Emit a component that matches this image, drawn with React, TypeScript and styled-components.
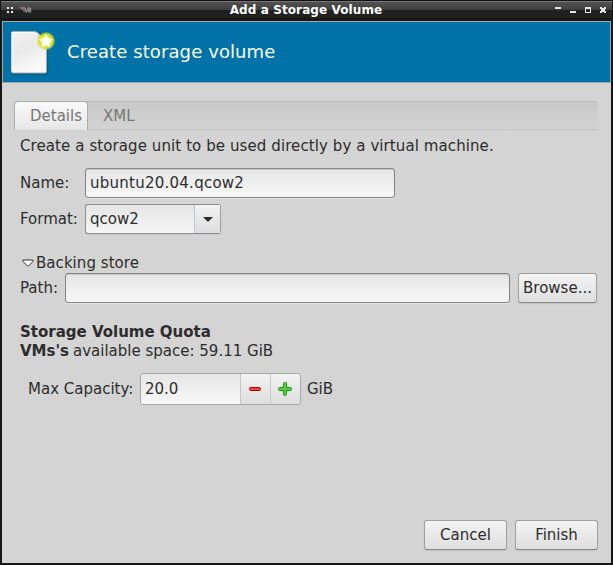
import React from "react";
import styled, { createGlobalStyle } from "styled-components";

const GlobalStyle = createGlobalStyle`
  * { box-sizing: border-box; }
  body { margin: 0; background: #191919; font-family: "DejaVu Sans", sans-serif; font-size: 15px; color: #2d2d2d; }
`;

const Window = styled.div`
  width: 613px;
  height: 565px;
  display: flex;
  flex-direction: column;
  padding: 0 2px 2px;
  background: #171717;
`;

const TitleBar = styled.header`
  height: 21px;
  flex: none;
  display: flex;
  align-items: flex-start;
  margin: 0 -1px;
  padding: 0 5px 0 6px;
  border-top: 1px solid #111;
  background: linear-gradient(#777 0 1px, #525252 1px, #3e3e3e 9px, #202020 9px, #202020 17px, #171717 17px);
`;

const TitleText = styled.h1`
  flex: 1;
  margin: 0;
  font-size: 12px;
  line-height: 18px;
  font-weight: bold;
  color: #fff;
  text-align: center;
  letter-spacing: 0.1px;
  padding-left: 20px;
`;

const Body = styled.main`
  flex: 1;
  display: flex;
  flex-direction: column;
  background: #d4d4d4;
`;

const Banner = styled.div`
  height: 62px;
  flex: none;
  display: flex;
  align-items: center;
  border: 1px solid #a8a8a8;
  background: #0072a8;
  padding-left: 6px;
`;

const BannerText = styled.h2`
  margin: 0 0 0 10px;
  font-size: 18px;
  line-height: 24px;
  font-weight: normal;
  letter-spacing: 0.1px;
  color: #fff;
  white-space: nowrap;
`;

const Tabs = styled.nav`
  display: flex;
  height: 29px;
  flex: none;
  margin: 18px 13px 0 12px;
  border-top: 1px solid #bdbdbd;
  border-bottom: 1px solid #c0c0c0;
  border-radius: 4px 4px 0 0;
  background: linear-gradient(#c9c9c9, #d3d3d3);
`;

const Tab = styled.div<{ $active?: boolean }>`
  width: ${(p) => (p.$active ? 74 : 60)}px;
  margin: -1px 0;
  padding-left: ${(p) => (p.$active ? 15 : 14)}px;
  line-height: 28px;
  color: #777;
  white-space: nowrap;
  border: ${(p) => (p.$active ? "1px solid #aeaeae" : "1px solid transparent")};
  border-bottom: 0;
  border-radius: 4px 4px 0 0;
  background: ${(p) => (p.$active ? "linear-gradient(#fafafa, #e6e6e6)" : "none")};
`;

const Line = styled.div<{ $top?: number; $height?: number; $indent?: number }>`
  display: flex;
  align-items: center;
  flex: none;
  white-space: nowrap;
  height: ${(p) => p.$height ?? 30}px;
  margin-top: ${(p) => p.$top ?? 0}px;
  padding-left: ${(p) => p.$indent ?? 18}px;
`;

const Label = styled.span<{ $width?: number; $bold?: boolean; $spacing?: number }>`
  flex: none;
  line-height: 18px;
  width: ${(p) => (p.$width ? `${p.$width}px` : "auto")};
  font-weight: ${(p) => (p.$bold ? "bold" : "normal")};
  letter-spacing: ${(p) => p.$spacing ?? 0}px;
`;

const Unit = styled(Label)`
  margin-left: 6px;
`;

const Entry = styled.div<{ $width: number }>`
  width: ${(p) => p.$width}px;
  height: 30px;
  padding-left: 4px;
  line-height: 28px;
  letter-spacing: 0.25px;
  border: 1px solid #858585;
  border-radius: 3px;
  background: linear-gradient(#e6e6e6, #f7f7f7);
  box-shadow: inset 0 1px 1px #c6c6c6, 0 1px 0 #e4e4e4;
`;

const Combo = styled.div`
  display: flex;
  width: 136px;
  height: 30px;
  border: 1px solid #8b8f94;
  border-right-color: #a0a0a0;
  border-radius: 3px;
  background: linear-gradient(#e5e5e5, #f6f6f6);
  box-shadow: 0 1px 0 #c8c8c8;
`;

const ComboText = styled.div`
  width: 109px;
  padding-left: 4px;
  line-height: 28px;
  border-right: 1px solid #bac6d0;
`;

const ComboArrow = styled.div`
  flex: 1;
  display: grid;
  place-items: center;
  padding-left: 1px;
  background: linear-gradient(#f2f2f2, #dedede);
`;

const Button = styled.button<{ $width: number }>`
  width: ${(p) => p.$width}px;
  height: 30px;
  flex: none;
  margin: 0 0 0 8px;
  padding: 0 0 1px;
  font: inherit;
  color: inherit;
  white-space: nowrap;
  border: 1px solid #a0a0a0;
  border-bottom-color: #888;
  border-radius: 3px;
  background: linear-gradient(#f4f4f4, #dedede);
  box-shadow: 0 1px 1px #c2c2c2;
`;

const Spin = styled.div`
  display: flex;
  width: 161px;
  height: 32px;
  border: 1px solid #a8a8a8;
  border-radius: 3px;
  overflow: hidden;
`;

const SpinValue = styled.div`
  width: 99px;
  padding-left: 4px;
  line-height: 30px;
  background: linear-gradient(#e6e6e6, #f8f8f8);
`;

const SpinButton = styled.div`
  width: 30px;
  display: grid;
  place-items: center;
  padding-right: 2px;
  border-left: 1px solid #c8c8c8;
  background: linear-gradient(#f3f3f3, #dedede);
`;

const Footer = styled.footer`
  display: flex;
  justify-content: flex-end;
  margin: auto 13px 13px 0;
`;

const MenuGlyphs = () => (
  <svg width="30" height="20" shapeRendering="crispEdges">
    <path fill="#eee" d="M0 6h2v2H0zM4 6h2v2H4zM0 10h2v2H0zM4 10h2v2H4z" />
    <g shapeRendering="auto" fill="none">
      <path d="M12.500 6.500h5.500M14 8h4M16 10h3" stroke="#806d72" strokeWidth="1.500" />
      <path d="M18 7l1.500 4L21.500 7l.5 4.500 1.500-4.500v4.500" stroke="#a0a0a0" strokeWidth="1.300" opacity=".8" />
    </g>
  </svg>
);

const WindowGlyphs = () => (
  <svg width="52" height="20" shapeRendering="crispEdges" fill="#e4e4e4">
    <path d="M0 6h6v2H0zM15 10h6v2h-6z" />
    <path fillRule="evenodd" d="M30 6h6v6h-6zM31 8v3h4V8z" />
    <path d="M45 6h2v1h2V6h2v2h-1v2h1v2h-2v-1h-2v1h-2v-2h1V8h-1z" />
  </svg>
);

const NewFileIcon = () => (
  <svg width="48" height="48" viewBox="0 0 48 48">
    <defs>
      <linearGradient id="paper" x1="0" y1="0" x2=".4" y2="1">
        <stop offset="0" stopColor="#f1f1f1" />
        <stop offset=".5" stopColor="#e8e9e8" />
        <stop offset="1" stopColor="#fafafa" />
      </linearGradient>
      <radialGradient id="glow">
        <stop offset="0" stopColor="#fff" />
        <stop offset=".55" stopColor="#ecec20" />
        <stop offset=".78" stopColor="#d5e22a" stopOpacity=".85" />
        <stop offset="1" stopColor="#a8d040" stopOpacity="0" />
      </radialGradient>
      <filter id="soft"><feGaussianBlur stdDeviation=".9" /></filter>
    </defs>
    <rect x="3" y="6" width="35" height="40" rx="1" fill="#00395b" opacity=".75" filter="url(#soft)" />
    <path d="M4 3.500h21q4 0 6 4l6.500 7v29q0 1.500-1.500 1.500h-32q-1.500 0-1.500-1.500V5q0-1.500 1.500-1.500z" fill="url(#paper)" stroke="#aaa9a2" />
    <path d="M3 43V4.500h23" fill="none" stroke="#fff" />
    <path d="M25 4q5 1 5 6 2 4 7 6" fill="#f8f8f8" stroke="#ccc" strokeWidth=".6" />
    <circle cx="37" cy="13" r="9.500" fill="url(#glow)" />
    <path d="M37 6.500l1.900 4.300 4.600.5-3.400 3.200.9 4.600-4-2.300-4 2.300.9-4.600-3.400-3.200 4.600-.5z" fill="#fff" stroke="#fff" strokeWidth=".6" />
  </svg>
);

const Expander = styled.svg`
  margin: 0 2px;
`;

export default function App() {
  return (
    <>
      <GlobalStyle />
      <Window>
        <TitleBar>
          <MenuGlyphs />
          <TitleText>Add a Storage Volume</TitleText>
          <WindowGlyphs />
        </TitleBar>
        <Body>
          <Banner>
            <NewFileIcon />
            <BannerText>Create storage volume</BannerText>
          </Banner>
          <Tabs>
            <Tab $active>Details</Tab>
            <Tab>XML</Tab>
          </Tabs>
          <Line $top={5} $height={22}><Label $spacing={0.09}>Create a storage unit to be used directly by a virtual machine.</Label></Line>
          <Line $top={11}><Label $width={65}>Name:</Label><Entry $width={310}>ubuntu20.04.qcow2</Entry></Line>
          <Line $top={6}>
            <Label $width={65}>Format:</Label>
            <Combo>
              <ComboText>qcow2</ComboText>
              <ComboArrow><svg width="10" height="5"><path d="M0 0h10L5 5z" fill="#2c2c2c" /></svg></ComboArrow>
            </Combo>
          </Line>
          <Line $top={19} $height={20}>
            <Expander width="12" height="8"><path d="M1 1h10v1.500L6.500 7h-1L1 2.500z" fill="#fff" stroke="#333" /></Expander>
            <Label $spacing={0.05}>Backing store</Label>
          </Line>
          <Line><Label $width={45}>Path:</Label><Entry $width={445} /><Button $width={79}>Browse...</Button></Line>
          <Line $top={19} $height={19}><Label $bold>Storage Volume Quota</Label></Line>
          <Line $height={19}><Label $bold $width={53}>VMs's</Label><Label>available space: 59.11 GiB</Label></Line>
          <Line $top={13} $height={32} $indent={26}>
            <Label $width={112}>Max Capacity:</Label>
            <Spin>
              <SpinValue>20.0</SpinValue>
              <SpinButton>
                <svg width="12" height="4"><rect x=".5" y=".5" width="11" height="3" rx="1.200" fill="#ee4444" stroke="#b90000" /></svg>
              </SpinButton>
              <SpinButton>
                <svg width="14" height="14"><path d="M5.500 1.500q0-1 1-1h1q1 0 1 1v4h4q1 0 1 1v1q0 1-1 1h-4v4q0 1-1 1h-1q-1 0-1-1v-4h-4q-1 0-1-1v-1q0-1 1-1h4z" fill="#55d044" stroke="#1d9512" /></svg>
              </SpinButton>
            </Spin>
            <Unit>GiB</Unit>
          </Line>
          <Footer><Button $width={83}>Cancel</Button><Button $width={83}>Finish</Button></Footer>
        </Body>
      </Window>
    </>
  );
}
